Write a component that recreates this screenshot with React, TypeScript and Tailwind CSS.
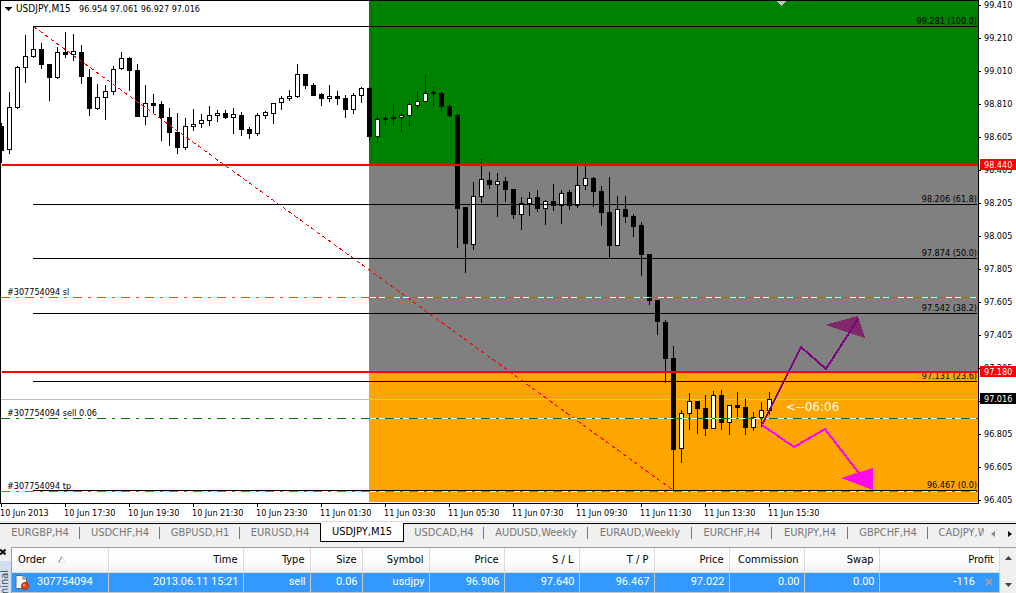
import clsx from "clsx";

// high, body top, body bottom, low, rising (1) or falling (0)
const CANDLES = [
  [123, 126, 151, 163, 0], [92, 107, 150, 154, 1], [66, 67, 108, 109, 1], [35, 56, 68, 83, 1],
  [26, 49, 57, 58, 1], [43, 49, 65, 69, 0], [64, 64, 78, 101, 0], [47, 52, 78, 79, 1],
  [32, 52, 55, 58, 0], [34, 51, 55, 61, 1], [45, 52, 77, 84, 0], [69, 77, 109, 116, 0],
  [84, 97, 109, 110, 1], [85, 91, 98, 120, 1], [66, 69, 92, 95, 1], [52, 58, 69, 70, 1],
  [57, 58, 71, 91, 0], [64, 70, 117, 117, 0], [85, 103, 117, 125, 1], [94, 103, 106, 113, 0],
  [101, 104, 118, 141, 0], [108, 117, 133, 146, 0], [113, 132, 148, 154, 0], [118, 126, 148, 150, 1],
  [109, 124, 127, 131, 1], [114, 120, 124, 128, 1], [106, 115, 121, 126, 1], [110, 113, 116, 122, 1],
  [110, 113, 118, 119, 0], [108, 114, 118, 134, 1], [112, 115, 130, 136, 0], [127, 129, 134, 139, 0],
  [113, 115, 134, 136, 1], [111, 112, 116, 119, 1], [103, 103, 114, 124, 1], [96, 98, 103, 110, 1],
  [90, 96, 99, 101, 1], [64, 74, 97, 98, 1], [74, 74, 86, 89, 0], [83, 85, 96, 96, 0],
  [93, 94, 99, 106, 0], [85, 96, 99, 102, 1], [91, 96, 99, 105, 0], [95, 98, 110, 118, 0],
  [93, 95, 110, 114, 1], [87, 88, 96, 103, 1], [87, 88, 137, 141, 0], [114, 119, 137, 143, 1],
  [114, 118, 120, 126, 0], [104, 117, 119, 126, 0], [112, 115, 118, 132, 1], [100, 104, 116, 127, 1],
  [91, 101, 106, 110, 1], [75, 93, 102, 102, 1], [87, 92, 94, 106, 0], [91, 93, 107, 112, 0],
  [104, 106, 116, 117, 0], [114, 115, 209, 248, 0], [207, 207, 244, 273, 0], [182, 196, 245, 250, 1],
  [159, 179, 197, 203, 1], [172, 180, 185, 189, 0], [173, 181, 185, 217, 1], [177, 181, 190, 202, 0],
  [189, 189, 215, 219, 0], [197, 203, 215, 230, 1], [192, 198, 204, 216, 1], [190, 197, 209, 212, 0],
  [200, 201, 209, 225, 1], [184, 201, 206, 211, 0], [190, 193, 206, 224, 1], [190, 192, 206, 210, 0],
  [166, 185, 206, 208, 1], [161, 178, 186, 190, 1], [177, 178, 192, 207, 0], [186, 191, 213, 226, 0],
  [177, 212, 246, 258, 0], [196, 209, 246, 246, 1], [196, 209, 217, 223, 0], [214, 216, 227, 237, 0],
  [222, 225, 255, 276, 0], [254, 254, 301, 305, 0], [300, 300, 322, 335, 0], [320, 322, 359, 383, 0],
  [346, 358, 450, 490, 0], [410, 413, 449, 463, 1], [393, 401, 414, 430, 1], [401, 401, 409, 434, 0],
  [395, 408, 429, 436, 0], [391, 395, 429, 429, 1], [390, 395, 423, 430, 0], [405, 405, 423, 435, 1],
  [392, 405, 408, 417, 0], [399, 407, 428, 435, 0], [412, 417, 428, 431, 1], [402, 410, 418, 427, 1],
  [392, 399, 411, 415, 1],
];

const FIB_LEVELS = [
  { y: 26, label: "99.281 (100.0)" },
  { y: 204, label: "98.206 (61.8)" },
  { y: 258, label: "97.874 (50.0)" },
  { y: 313, label: "97.542 (38.2)" },
  { y: 381, label: "97.131 (23.6)" },
  { y: 490, label: "96.467 (0.0)" },
];

const ORDER_LINES = [
  { y: 297, label: "#307754094 sl", color: "#ff4500" },
  { y: 418, label: "#307754094 sell 0.06", color: "#008000" },
  { y: 491, label: "#307754094 tp", color: "#ff4500" },
];

const PRICES = [
  "99.410", "99.210", "99.010", "98.810", "98.605", "98.405", "98.205", "98.005",
  "97.805", "97.605", "97.405", "97.205", "97.005", "96.805", "96.605", "96.405",
];

const PRICE_TAGS = [
  { y: 159, label: "98.440", color: "#ff0000" },
  { y: 366, label: "97.180", color: "#ff0000" },
  { y: 393, label: "97.016", color: "#000000" },
];

const TIMES = [
  "10 Jun 2013", "10 Jun 17:30", "10 Jun 19:30", "10 Jun 21:30", "10 Jun 23:30",
  "11 Jun 01:30", "11 Jun 03:30", "11 Jun 05:30", "11 Jun 07:30", "11 Jun 09:30",
  "11 Jun 11:30", "11 Jun 13:30", "11 Jun 15:30",
];

const TABS = [
  { label: "EURGBP,H4", width: "w-20" },
  { label: "USDCHF,H4", width: "w-20" },
  { label: "GBPUSD,H1", width: "w-20" },
  { label: "EURUSD,H4", width: "w-20" },
  { label: "USDJPY,M15", width: "w-[84px]", active: true },
  { label: "USDCAD,H4", width: "w-20" },
  { label: "AUDUSD,Weekly", width: "w-[104px]" },
  { label: "EURAUD,Weekly", width: "w-[104px]" },
  { label: "EURCHF,H4", width: "w-20" },
  { label: "EURJPY,H4", width: "w-[76px]" },
  { label: "GBPCHF,H4", width: "w-20" },
  { label: "CADJPY,Weekly", width: "w-24" },
];

const COLUMNS = [
  { label: "Order", value: "307754094", width: "w-24" },
  { label: "Time", value: "2013.06.11 15:21", width: "w-[135px]" },
  { label: "Type", value: "sell", width: "w-[67px]" },
  { label: "Size", value: "0.06", width: "w-[52px]" },
  { label: "Symbol", value: "usdjpy", width: "w-[67px]" },
  { label: "Price", value: "96.906", width: "w-[75px]" },
  { label: "S / L", value: "97.640", width: "w-[75px]" },
  { label: "T / P", value: "96.467", width: "w-[75px]" },
  { label: "Price", value: "97.022", width: "w-[75px]" },
  { label: "Commission", value: "0.00", width: "w-[75px]" },
  { label: "Swap", value: "0.00", width: "w-[75px]" },
  { label: "Profit", value: "-116", width: "w-auto" },
];

function Chart() {
  return (
    <svg viewBox="0 0 1016 521" className="block w-full h-auto shrink-0" shapeRendering="crispEdges" fontSize="9">
      {/* Zones */}
      <rect x="369" y="1" width="609" height="164" fill="#008000" />
      <rect x="369" y="165" width="609" height="207" fill="#808080" />
      <rect x="369" y="372" width="609" height="130" fill="#ffa500" />

      {/* Bid line */}
      <rect x="1" y="399" width="980" height="1" fill="#c0c0c0" />

      {CANDLES.map(([high, top, bottom, low, up], i) => {
        const x = 1 + i * 8;
        return (
          <g key={i}>
            <rect x={x} y={high} width="1" height={low - high} />
            <rect x={x - 2} y={top} width="5" height={bottom - top} />
            {up === 1 && <rect x={x - 1} y={top + 1} width="3" height={bottom - top - 2} fill="#fff" />}
          </g>
        );
      })}

      {/* Fibonacci retracement */}
      <path d="M33.5 26.5L673.5 490.5" stroke="#ff0000" strokeDasharray="4 3" />
      {FIB_LEVELS.map(({ y, label }) => (
        <g key={label}>
          <rect x="33" y={y} width="944" height="1" />
          <text x="977" y={y - 2} textAnchor="end">{label}</text>
        </g>
      ))}

      {ORDER_LINES.map(({ y, label, color }) => (
        <g key={label}>
          <path d={`M1 ${y + 0.5}H978`} stroke="#fff" />
          <path d={`M1 ${y + 0.5}H978`} stroke={color} strokeDasharray="9 6 3 6" />
          <text x="7" y={y - 2}>{label}</text>
        </g>
      ))}

      <rect x="2" y="164" width="976" height="2" fill="#ff0000" />
      <rect x="2" y="371" width="976" height="2" fill="#ff0000" />

      {/* Scenario arrows */}
      <path d="M825 325L858 316L865 338Z" fill="#80286c" />
      <path d="M762 425L801 347L826 369L858 319" fill="none" stroke="#800080" strokeWidth="2" />
      <path d="M841 478L873 468V490Z" fill="#ff0ae8" />
      <path d="M762 425L794 447L825 429L865 481" fill="none" stroke="#ff00ff" strokeWidth="2" />
      <text x="786" y="411" fontSize="12" fill="#fff" className="font-['DejaVu_Sans',sans-serif]">{"<--06:06"}</text>

      {/* Frame */}
      <path d="M0.5 504V0.5H978.5V503.5H0" fill="none" stroke="#000" />
      <path d="M776 1H787L781.5 6Z" fill="#c0c0c0" />
      <path d="M4 7H12L8 11Z" />
      <text x="16" y="12" fontSize="10">USDJPY,M15</text>
      <text x="79" y="12">96.954 97.061 96.927 97.016</text>

      {PRICES.map((price, i) => (
        <g key={price}>
          <rect x="979" y={5 + i * 33} width="2" height="1" />
          <text x="984" y={8 + i * 33}>{price}</text>
        </g>
      ))}
      {PRICE_TAGS.map(({ y, label, color }) => (
        <g key={label}>
          <rect x="980" y={y} width="36" height="11" fill={color} />
          <text x="984" y={y + 9} fill="#fff">{label}</text>
        </g>
      ))}
      {TIMES.map((time, i) => (
        <g key={time}>
          <rect x={1 + i * 64} y="504" width="1" height="3" />
          <text x={i * 64} y="516">{time}</text>
        </g>
      ))}
    </svg>
  );
}

function ChartTabs() {
  return (
    <nav className="flex h-[21px] shrink-0 border-t border-black bg-[#f0f0f0] text-[11px] leading-4 text-[#767676]">
      <div className="-mt-px flex min-w-0 flex-1 overflow-hidden">
        {TABS.map((tab, i) => (
          <button
            key={tab.label}
            className={clsx(
              "relative h-[19px] shrink-0 whitespace-nowrap",
              tab.width,
              tab.active ? "border-x border-b border-black bg-white text-black" : "border-t border-black",
            )}
          >
            {tab.label}
            {!tab.active && !TABS[i + 1]?.active && (
              <span className="absolute right-0 top-[3px] h-3 w-px bg-[#767676]" />
            )}
          </button>
        ))}
      </div>
      <button aria-label="Scroll tabs left" className="flex w-4 items-center justify-center pl-0.5">
        <svg width="4" height="6" viewBox="0 0 4 6" fill="#8c8c8c"><path d="M4 0V6L0 3Z" /></svg>
      </button>
      <button aria-label="Scroll tabs right" className="flex w-4 items-center justify-center pl-1">
        <svg width="4" height="6" viewBox="0 0 4 6"><path d="M0 0V6L4 3Z" /></svg>
      </button>
    </nav>
  );
}

function OrderIcon() {
  return (
    <svg width="14" height="15" viewBox="0 0 14 15" className="shrink-0">
      <path d="M1 0.5H8L11.5 4V13.5H1Z" fill="#f4f4f4" stroke="#666" />
      <path d="M8 0.5V4H11.5" fill="#ccc" stroke="#777" />
      <circle cx="10" cy="11" r="3.5" fill="#e8481c" stroke="#a52a0a" />
      <circle cx="9" cy="10" r="1" fill="#ffa988" />
    </svg>
  );
}

function Terminal() {
  return (
    <section className="mt-[3px] flex min-h-0 flex-1 overflow-hidden text-[11px] leading-4">
      <div className="flex w-[11px] shrink-0 flex-col">
        <button aria-label="Close terminal" className="flex h-[14px] items-center pb-1">
          <svg width="6" height="6" viewBox="0 0 6 6" stroke="#000" strokeWidth="2"><path d="M0 0.5L5.5 5.5M5.5 0.5L0 5.5" /></svg>
        </button>
        <div className="flex min-h-0 flex-1 items-start overflow-hidden bg-[#cfdfee] pt-[9px] text-[#44505c]">
          <span className="rotate-180 text-[11px] leading-[10px] [writing-mode:vertical-rl]">Terminal</span>
        </div>
      </div>

      <div className="min-w-0 flex-1 border-l border-t border-[#a0a0a0] bg-white">
        <table className="w-full table-fixed border-collapse">
          <thead>
            <tr className="h-6 bg-linear-to-b from-white from-40% to-[#f2f3f5]">
              {COLUMNS.map((col, i) => (
                <th
                  key={i}
                  className={clsx(
                    "border-r border-b border-[#dcdcdc] p-0 pr-[5px] font-normal",
                    col.width,
                    i === 0 ? "pl-1.5 text-left" : "text-right",
                  )}
                >
                  {col.label}
                  {i === 0 && (
                    <svg width="8" height="7" viewBox="0 0 8 7" className="ml-3 inline" fill="none">
                      <path d="M4 0.5L7.5 6.5H0.5" stroke="#e4e4e4" />
                      <path d="M0.5 6.5L4 0.5" stroke="#777" />
                    </svg>
                  )}
                </th>
              ))}
            </tr>
          </thead>
          <tbody>
            <tr className="h-5 bg-[#3399ff] font-[Roboto,sans-serif] text-white">
              {COLUMNS.map((col, i) => (
                <td key={i} className="border-r border-b border-[#c8c8c8] p-0 pr-1 text-right">
                  {i === 0 ? (
                    <span className="flex items-center gap-2 pl-[3px]">
                      <OrderIcon />
                      {col.value}
                    </span>
                  ) : i === COLUMNS.length - 1 ? (
                    <span className="flex items-center justify-end gap-2.5 pr-0.5">
                      {col.value}
                      <button aria-label="Close order">
                        <svg width="8" height="8" viewBox="0 0 8 8" stroke="#a0a0a0" strokeWidth="2"><path d="M1 1L7 7M7 1L1 7" /></svg>
                      </button>
                    </span>
                  ) : (
                    col.value
                  )}
                </td>
              ))}
            </tr>
          </tbody>
        </table>
      </div>

      <div className="flex w-4 shrink-0 flex-col items-center justify-between border-t border-[#a0a0a0] bg-[#f0f0f0] pt-2 pb-1.5">
        <button aria-label="Scroll up">
          <svg width="7" height="4" viewBox="0 0 7 4" className="block" fill="#444"><path d="M3.5 0L7 4H0Z" /></svg>
        </button>
        <button aria-label="Scroll down">
          <svg width="7" height="4" viewBox="0 0 7 4" className="block" fill="#444"><path d="M0 0H7L3.5 4Z" /></svg>
        </button>
      </div>
    </section>
  );
}

export default function App() {
  return (
    <main className="flex h-screen flex-col overflow-hidden bg-[#f0f0f0] font-['DejaVu_Sans_Condensed','DejaVu_Sans',sans-serif] text-black">
      <div className="shrink-0 border-b border-[#dcdcdc] bg-white">
        <Chart />
      </div>
      <div className="h-px shrink-0 bg-white" />
      <ChartTabs />
      <Terminal />
    </main>
  );
}
